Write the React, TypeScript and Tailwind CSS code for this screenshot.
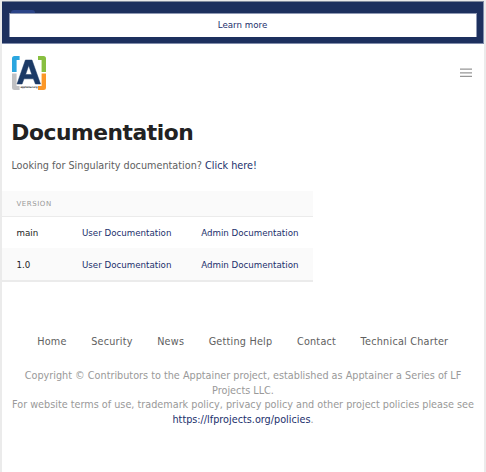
const links = ['Home', 'Security', 'News', 'Getting Help', 'Contact', 'Technical Charter'];

function Logo() {
  return (
    <svg className="block h-[34px] w-[34px]" viewBox="0 0 34 34" role="img" aria-label="Apptainer">
      <path d="M0 16V2.5Q0 0 2.5 0H7.6V4H4.6V16Z" fill="#2ba6df" />
      <path d="M26 0H31.5Q34 0 34 2.5V16H29.6V4H26Z" fill="#88bf40" />
      <path d="M0 17.5H4.6V30H7.6V34H2.5Q0 34 0 31.5Z" fill="#c1c1c3" />
      <path d="M29.6 17.5H34V31.5Q34 34 31.5 34H26V30H29.6Z" fill="#fb9728" />
      <path
        d="M13.4 4H20L28.5 28H23.4L21.4 22.8H12L10.1 28H5ZM16.7 9.5L13.6 18.5H19.8Z"
        fill="#1c3a66"
        stroke="#1c3a66"
        strokeWidth="0.5"
        fillRule="evenodd"
      />
      <text x="17" y="32.2" textAnchor="middle" fontSize="2.8" textLength="17" lengthAdjust="spacingAndGlyphs" fill="#222" fontWeight="bold" fontFamily="DejaVu Sans, sans-serif">
        apptainer.org
      </text>
    </svg>
  );
}

function Row({ version, shaded }: { version: string; shaded?: boolean }) {
  return (
    <div
      className={
        shaded
          ? 'flex h-[34px] border-b-2 border-[#ebebeb] bg-[#fafafa] leading-[34px]'
          : 'flex h-[31px] leading-[32px]'
      }
    >
      <span className="w-[65.5px] text-[#222]">{version}</span>
      <a className="w-[119.2px] text-[#1b2f6c]">User Documentation</a>
      <a className="text-[#1b2f6c]">Admin Documentation</a>
    </div>
  );
}

export default function App() {
  return (
    <div className="h-[472px] w-[486px] overflow-hidden border-x-2 border-t border-[#ebebeb] bg-white font-['DejaVu_Sans',sans-serif] text-[9.68px] whitespace-nowrap text-[#606060]">
      <div className="h-[43px] border-y border-r border-t-[#7f899c] border-r-[#808cab] border-b-[#808cab] bg-[#1d305e] pr-[6px] pl-[7px]">
        <div className="h-[11px] pt-[8px]">
          <div className="ml-[2px] h-[3px] w-[24px] rounded-t-[3px] bg-[#2b4488]" />
        </div>
        <button className="block h-[24px] w-full border border-b-0 border-[#8e98b3] bg-white pr-[1px] text-[8.68px] leading-[23px] text-[#1b2f6c]">
          Learn more
        </button>
      </div>
      <header className="flex h-[57px] items-center justify-between pr-[12px] pl-[10px]">
        <Logo />
        <svg className="h-[10px] w-[12px]" viewBox="0 0 12 10" fill="#979797">
          <path d="M0 .6H12V1.8H0ZM0 4.2H12V5.4H0ZM0 7.8H12V9H0Z" />
        </svg>
      </header>
      <main>
        <h1 className="mt-[17px] ml-[9.3px] text-[21.8px] leading-[30px] font-bold tracking-[-0.46px] text-[#222]">
          Documentation
        </h1>
        <p className="mt-[11px] ml-[9.4px] leading-[14px]">
          Looking for Singularity documentation? <a className="text-[#1b2f6c]">Click here!</a>
        </p>
        <section className="mt-[18px] w-[311px] text-[8.68px] [&>div]:pl-[14.5px]">
          <div className="h-[26px] border-b border-[#ebebeb] bg-[#fafafa] text-[7px] leading-[27px] tracking-[0.55px] text-[#999]">
            VERSION
          </div>
          <Row version="main" />
          <Row version="1.0" shaded />
        </section>
      </main>
      <footer>
        <nav className="mt-[52px] ml-[35.2px] flex gap-[24.5px] leading-[15px] tracking-[0.22px]">
          {links.map((label) => (
            <a key={label}>{label}</a>
          ))}
        </nav>
        <div className="mt-[20px] text-center leading-[14.6px] text-[#999]">
          <p>Copyright © Contributors to the Apptainer project, established as Apptainer a Series of LF</p>
          <p>Projects LLC.</p>
          <p>For website terms of use, trademark policy, privacy policy and other project policies please see</p>
          <p>
            <a className="text-[#1b2f6c]">https://lfprojects.org/policies</a>.
          </p>
        </div>
      </footer>
    </div>
  );
}
